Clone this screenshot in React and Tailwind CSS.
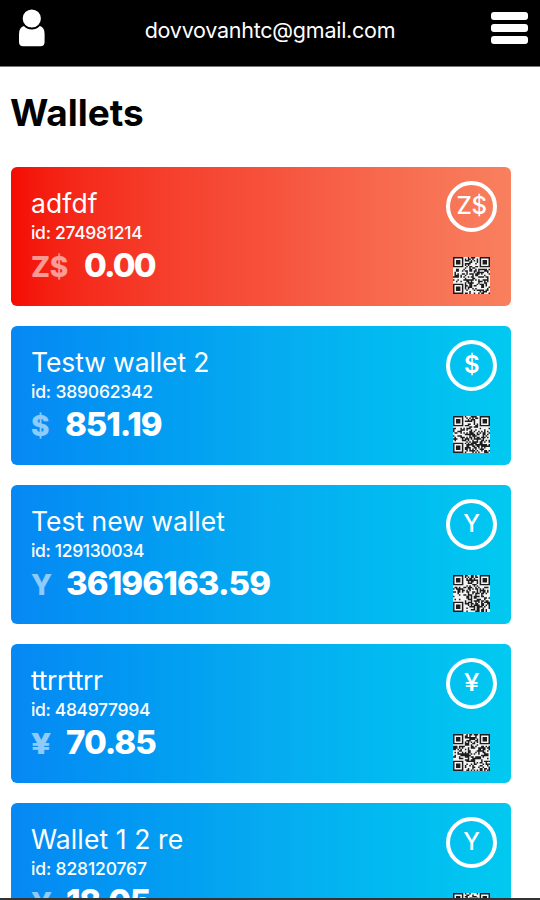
const wallets = [
  { name: "adfdf", id: "274981214", symbol: "Z$", balance: "0.00", red: true, nameCls: "tracking-[0.1px]", idCls: "tracking-[-0.3px]", symCls: "w-[53px]", balCls: "tracking-[-1.8px]" },
  { name: "Testw wallet 2", id: "389062342", symbol: "$", balance: "851.19", nameCls: "tracking-[-0.1px]", idCls: "tracking-[-0.2px]", symCls: "w-[34px]", balCls: "tracking-[-1.1px]" },
  { name: "Test new wallet", id: "129130034", symbol: "Y", balance: "36196163.59", nameCls: "tracking-[0px]", idCls: "tracking-[-0.35px]", symCls: "w-[35px]", balCls: "tracking-[-0.9px]" },
  { name: "ttrrttrr", id: "484977994", symbol: "¥", balance: "70.85", nameCls: "tracking-[-0.35px]", idCls: "tracking-[-0.35px]", symCls: "w-[35px]", balCls: "tracking-[-1px]" },
  { name: "Wallet 1 2 re", id: "828120767", symbol: "Y", balance: "18.05", nameCls: "tracking-[0.1px]", idCls: "tracking-[-0.15px]", symCls: "w-[35px]", balCls: "tracking-[-1.4px]" },
];

const QR_SIZE = 25;

// finder squares sit in three corners, the rest is filled from the wallet id
function qrPath(seed) {
  let state = Number(seed) % 2147483647;
  let d = "";
  for (let y = 0; y < QR_SIZE; y++) {
    for (let x = 0; x < QR_SIZE; x++) {
      state = (state * 48271) % 2147483647;
      let dark = state / 2147483647 < 0.48;
      const fx = x < 8 ? x : x > 16 && y < 8 ? 24 - x : -1;
      const fy = y < 8 ? y : y > 16 ? 24 - y : -1;
      if (fx >= 0 && fy >= 0) {
        const ring = Math.max(Math.abs(fx - 3), Math.abs(fy - 3));
        dark = ring === 3 || ring < 2;
      }
      if (dark) d += `M${x} ${y}h1v1h-1z`;
    }
  }
  return d;
}

function QrCode({ value }) {
  return (
    <svg viewBox="0 0 25 25" className="mt-[25px] h-[37px] w-[37px] bg-[#f4f4f4]">
      <path d={qrPath(value)} fill="#1c1c1c" />
    </svg>
  );
}

function WalletCard({ wallet }) {
  const bg = wallet.red
    ? "bg-linear-to-r from-[#f40a02] via-[#f6503b] to-[#f8805f]"
    : "bg-linear-to-r from-[#0788f4] via-[#06aaf0] to-[#02c9f0]";

  return (
    <div className={`flex h-[139px] shrink-0 justify-between rounded-md pl-5 pr-[14px] text-white ${bg}`}>
      <div className="pt-5 whitespace-nowrap">
        <div className={`text-[26.5px] leading-8 ${wallet.nameCls}`}>{wallet.name}</div>
        <div className={`mt-[2px] text-[17.5px] leading-6 font-medium ${wallet.idCls}`}>id: {wallet.id}</div>
        <div className="flex items-baseline leading-10">
          <span className={`text-[28px] font-extrabold tracking-[-0.3px] text-white/55 ${wallet.symCls}`}>
            <span className={wallet.symbol === "¥" ? "inline-block origin-left scale-x-125" : ""}>{wallet.symbol}</span>
          </span>
          <span className={`text-[33px] font-extrabold ${wallet.balCls}`}>{wallet.balance}</span>
        </div>
      </div>
      <div className="flex flex-col items-center pt-[14px]">
        <div className="flex h-[51px] w-[51px] items-center justify-center rounded-full border-[4px] border-white pb-px text-[24px] font-medium tracking-[-0.4px]">
          <span className={wallet.symbol === "$" ? "font-semibold" : wallet.symbol === "¥" ? "scale-x-115" : ""}>{wallet.symbol}</span>
        </div>
        <QrCode value={wallet.id} />
      </div>
    </div>
  );
}

function Header() {
  return (
    <header className="flex h-[67px] shrink-0 items-start justify-between border-b border-[#777] bg-black pl-[18px] pr-3 text-white">
      <svg viewBox="0 0 28 38" className="mt-[9px] h-[38px] w-7" fill="white">
        <path d="M6 17 H22 Q26.6 18.5 26.6 25 V33 Q26.6 37.2 22.4 37.2 H5.2 Q1 37.2 1 33 V25 Q1 18.5 6 17 Z" />
        <circle cx="13.8" cy="9.5" r="10" stroke="black" strokeWidth="1.8" />
      </svg>
      <span className="mt-[14px] ml-[3px] text-[21.5px] leading-8 tracking-[-0.25px]">dovvovanhtc@gmail.com</span>
      <div className="mt-3 flex w-[37px] flex-col gap-[4.5px]">
        <span className="h-[7.5px] rounded-[3px] bg-white" />
        <span className="h-[7.5px] rounded-[3px] bg-white" />
        <span className="h-[7.5px] rounded-[3px] bg-white" />
      </div>
    </header>
  );
}

export default function App() {
  return (
    <main className="flex h-[900px] w-[540px] flex-col overflow-hidden border-b-2 border-[#333] bg-white font-['Inter',sans-serif]">
      <Header />
      <h1 className="mt-[21px] ml-[10px] shrink-0 text-[37px] leading-[50px] font-bold tracking-[0px] text-black">Wallets</h1>
      <section className="mt-[29px] ml-[11px] flex w-[500px] flex-col gap-5">
        {wallets.map((w) => (
          <WalletCard key={w.id} wallet={w} />
        ))}
      </section>
    </main>
  );
}
